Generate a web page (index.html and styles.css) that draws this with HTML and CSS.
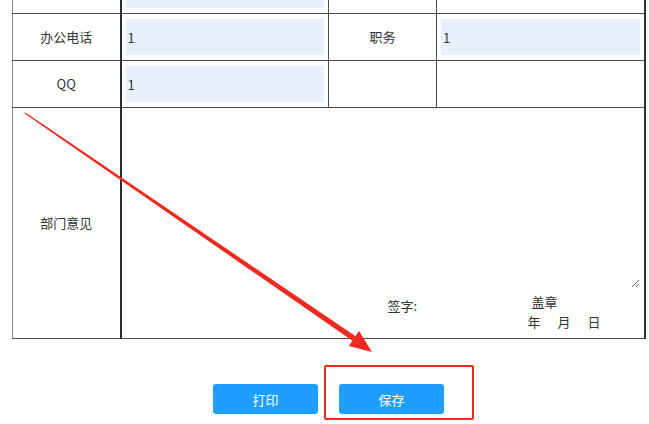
FILE: index.html
```html
<!DOCTYPE html>
<html lang="zh-CN">
<head>
  <meta charset="UTF-8" />
  <title>部门意见表</title>
  <meta name="viewport" content="width=device-width, initial-scale=1.0" />
  <link rel="stylesheet" href="styles.css">
</head>
<body>

<div class="page">
  <!-- Form table -->
  <table class="form-table">
    <colgroup>
      <col class="c-label">
      <col class="c-field">
      <col class="c-label">
      <col class="c-field">
    </colgroup>
    <tr>
      <td class="label"></td>
      <td><input type="text" class="field" value="1"></td>
      <td class="label"></td>
      <td></td>
    </tr>
    <tr>
      <td class="label">办公电话</td>
      <td><input type="text" class="field" value="1"></td>
      <td class="label">职务</td>
      <td><input type="text" class="field" value="1"></td>
    </tr>
    <tr>
      <td class="label">QQ</td>
      <td><input type="text" class="field" value="1"></td>
      <td class="label"></td>
      <td></td>
    </tr>
    <tr class="opinion-row">
      <td class="label">部门意见</td>
      <td colspan="3" class="opinion">
        <textarea class="opinion-text"></textarea>
        <div class="sign">
          <span class="sign-name">签字:</span>
          <div class="sign-seal">
            <span class="seal">盖章</span>
            <span class="date">年<i>月</i><i>日</i></span>
          </div>
        </div>
      </td>
    </tr>
  </table>

  <!-- Actions -->
  <div class="actions">
    <button class="btn">打印</button>
    <button class="btn">保存</button>
  </div>

  <!-- Red markup drawn on top -->
  <svg class="markup" width="649" height="424" viewBox="0 0 649 424">
    <polygon fill="#ec2a1f" points="24.6,113.6 25.4,112.4 355.6,336.2 352.4,340.8" />
    <polygon fill="#ec2a1f" points="372,352 348.8,345.9 359,331.1" />
  </svg>
  <div class="mark-box"></div>
</div>

</body>
</html>
```

FILE: styles.css
```css
* {
  margin: 0; padding: 0; box-sizing: border-box;
  font-family: "Noto Sans CJK SC", "Microsoft YaHei", sans-serif;
}

body {
  background: #fff;
  color: #333;
  font-size: 13px;
}

.page {
  position: relative;
  width: 649px;
  height: 424px;
  overflow: hidden;
}

.form-table {
  width: 633px;
  margin: -34px 0 0 12px;
  border-collapse: collapse;
  table-layout: fixed;
}

.c-label { width: 108px; }
.c-field { width: 208px; }

.form-table td {
  border: 1px solid #4a4a4a;
  padding: 5px 4px;
  height: 47px;
  vertical-align: middle;
}

.form-table td:first-child {
  border-left-color: #888;
  border-right: 2px solid #2b2b2b;
}

.form-table td:last-child {
  border-right: 2px solid #333;
}

.form-table .label {
  text-align: center;
  color: #333;
  padding-bottom: 7px;
}

.field {
  display: block;
  width: 100%;
  height: 36px;
  border: none;
  outline: none;
  background: #e8f0fe;
  padding: 0 2px;
  font-size: 13px;
  color: #333;
}

.opinion-row td {
  height: 231px;
}

.opinion {
  vertical-align: top;
  padding: 5px 4px 6px;
}

.opinion-text {
  display: block;
  width: 100%;
  height: 173px;
  border: none;
  outline: none;
  background: #fff;
}

.sign {
  display: flex;
  align-items: flex-start;
  padding-left: 262px;
  padding-top: 4px;
}

.sign-name {
  margin-top: 4px;
  width: 140px;
}

.sign-seal {
  display: flex;
  flex-direction: column;
  line-height: 20px;
}

.seal { padding-left: 4px; }

.date i {
  font-style: normal;
  margin-left: 17px;
}

.actions {
  display: flex;
  justify-content: center;
  gap: 21px;
  margin: 45px 0 0 12px;
  width: 633px;
}

.btn {
  width: 105px;
  height: 30px;
  border: none;
  border-radius: 3px;
  background: #1e9fff;
  color: #fff;
  font-size: 13px;
  cursor: pointer;
}

.markup {
  position: absolute;
  left: 0;
  top: 0;
  pointer-events: none;
}

.mark-box {
  position: absolute;
  left: 324px;
  top: 365px;
  width: 150px;
  height: 55px;
  border: 2px solid #ec2a1f;
  border-radius: 2px;
}
```
